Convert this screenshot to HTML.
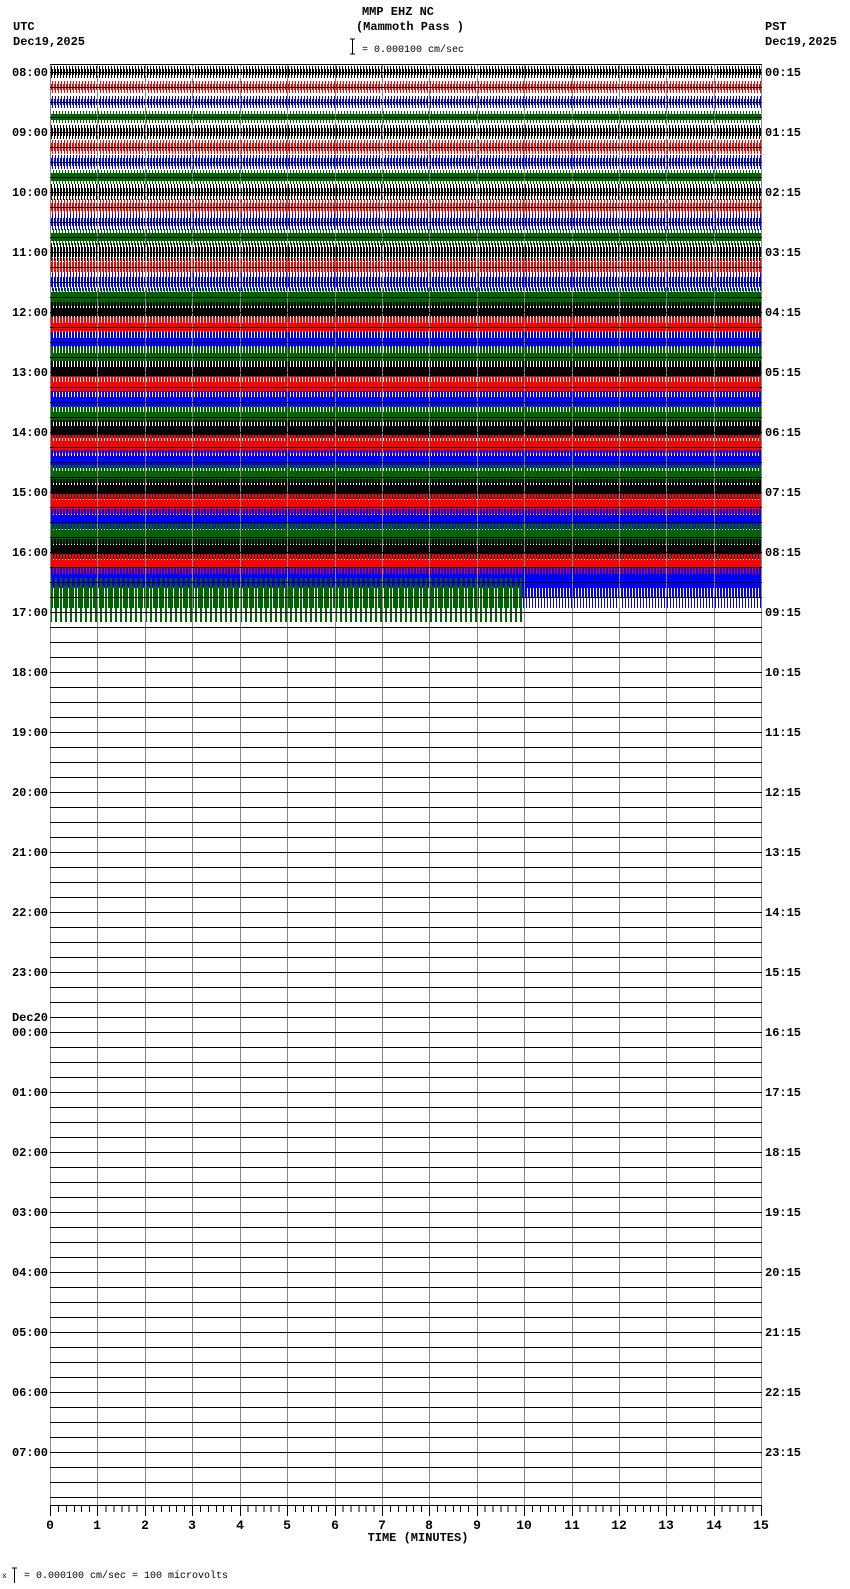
<!DOCTYPE html>
<html><head><meta charset="utf-8"><style>
html,body{margin:0;padding:0;background:#fff;}
body{width:850px;height:1584px;overflow:hidden;}
svg text{font-family:"Liberation Mono",monospace;}
</style></head><body>
<svg width="850" height="1584" viewBox="0 0 850 1584" xmlns="http://www.w3.org/2000/svg" shape-rendering="crispEdges">
<defs>
<pattern id="kS" width="3" height="4" patternUnits="userSpaceOnUse"><rect x="0" width="1" height="4" fill="#000"/></pattern>
<pattern id="kD" width="3" height="4" patternUnits="userSpaceOnUse"><rect x="0" width="2" height="4" fill="#000"/></pattern>
<pattern id="rS" width="3" height="4" patternUnits="userSpaceOnUse"><rect x="1" width="1" height="4" fill="#f00"/></pattern>
<pattern id="rD" width="3" height="4" patternUnits="userSpaceOnUse"><rect x="0" width="2" height="4" fill="#f00"/></pattern>
<pattern id="bS" width="3" height="4" patternUnits="userSpaceOnUse"><rect x="1" width="1" height="4" fill="#00f"/></pattern>
<pattern id="bD" width="3" height="4" patternUnits="userSpaceOnUse"><rect x="0" width="2" height="4" fill="#00f"/></pattern>
<pattern id="gS" width="3" height="4" patternUnits="userSpaceOnUse"><rect x="2" width="1" height="4" fill="#006400"/></pattern>
<pattern id="gD" width="3" height="4" patternUnits="userSpaceOnUse"><rect x="0" width="2" height="4" fill="#006400"/></pattern>
<pattern id="gX" width="5" height="4" patternUnits="userSpaceOnUse"><rect x="0" width="2" height="4" fill="#006400"/></pattern>
</defs>

<!-- header -->
<text x="398" y="15" font-size="12" text-anchor="middle" font-weight="bold">MMP EHZ NC</text>
<text x="410" y="30" font-size="12" text-anchor="middle" font-weight="bold">(Mammoth Pass )</text>
<text x="13" y="30" font-size="12" font-weight="bold">UTC</text>
<text x="13" y="45" font-size="12" font-weight="bold">Dec19,2025</text>
<text x="765" y="30" font-size="12" font-weight="bold">PST</text>
<text x="765" y="45" font-size="12" font-weight="bold">Dec19,2025</text>
<path d="M352.5 39v15M350 39h5M350 54h5" stroke="#000" fill="none"/>
<text x="362" y="52" font-size="10">= 0.000100 cm/sec</text>

<!-- traces -->
<g id="traces">
<rect x="50" y="66" width="711" height="12" fill="url(#kS)"/><rect x="50" y="69" width="711" height="6" fill="url(#kD)"/>
<rect x="50" y="81" width="711" height="12" fill="url(#rS)"/><rect x="50" y="84" width="711" height="6" fill="url(#rD)"/>
<rect x="50" y="96" width="711" height="12" fill="url(#bS)"/><rect x="50" y="99" width="711" height="6" fill="url(#bD)"/>
<rect x="50" y="111" width="711" height="12" fill="url(#gS)"/><rect x="50" y="114" width="711" height="6" fill="url(#gD)"/>
<rect x="50" y="125" width="711" height="14" fill="url(#kS)"/><rect x="50" y="128" width="711" height="8" fill="url(#kD)"/>
<rect x="50" y="140" width="711" height="14" fill="url(#rS)"/><rect x="50" y="143" width="711" height="8" fill="url(#rD)"/>
<rect x="50" y="155" width="711" height="14" fill="url(#bS)"/><rect x="50" y="158" width="711" height="8" fill="url(#bD)"/>
<rect x="50" y="170" width="711" height="14" fill="url(#gS)"/><rect x="50" y="173" width="711" height="8" fill="url(#gD)"/>
<rect x="50" y="184" width="711" height="16" fill="url(#kS)"/><rect x="50" y="188" width="711" height="8" fill="url(#kD)"/>
<rect x="50" y="199" width="711" height="16" fill="url(#rS)"/><rect x="50" y="203" width="711" height="8" fill="url(#rD)"/>
<rect x="50" y="214" width="711" height="16" fill="url(#bS)"/><rect x="50" y="218" width="711" height="8" fill="url(#bD)"/>
<rect x="50" y="229" width="711" height="16" fill="url(#gS)"/><rect x="50" y="233" width="711" height="8" fill="url(#gD)"/>
<rect x="50" y="243" width="711" height="18" fill="url(#kS)"/><rect x="50" y="247" width="711" height="10" fill="url(#kD)"/>
<rect x="50" y="258" width="711" height="18" fill="url(#rS)"/><rect x="50" y="262" width="711" height="10" fill="url(#rD)"/>
<rect x="50" y="273" width="711" height="18" fill="url(#bS)"/><rect x="50" y="277" width="711" height="10" fill="url(#bD)"/>
<rect x="50" y="288" width="711" height="18" fill="url(#gS)"/><rect x="50" y="292" width="711" height="10" fill="url(#gD)"/>
<rect x="50" y="302" width="711" height="20" fill="url(#kD)"/><rect x="50" y="308" width="711" height="8" fill="#000"/>
<rect x="50" y="317" width="711" height="20" fill="url(#rD)"/><rect x="50" y="323" width="711" height="8" fill="#f00"/>
<rect x="50" y="332" width="711" height="20" fill="url(#bD)"/><rect x="50" y="338" width="711" height="8" fill="#00f"/>
<rect x="50" y="347" width="711" height="20" fill="url(#gD)"/><rect x="50" y="353" width="711" height="8" fill="#006400"/>
<rect x="50" y="361" width="711" height="22" fill="url(#kD)"/><rect x="50" y="367" width="711" height="10" fill="#000"/>
<rect x="50" y="376" width="711" height="22" fill="url(#rD)"/><rect x="50" y="382" width="711" height="10" fill="#f00"/>
<rect x="50" y="391" width="711" height="22" fill="url(#bD)"/><rect x="50" y="397" width="711" height="10" fill="#00f"/>
<rect x="50" y="406" width="711" height="22" fill="url(#gD)"/><rect x="50" y="412" width="711" height="10" fill="#006400"/>
<rect x="50" y="420" width="711" height="24" fill="url(#kD)"/><rect x="50" y="426" width="711" height="12" fill="#000"/>
<rect x="50" y="435" width="711" height="24" fill="url(#rD)"/><rect x="50" y="441" width="711" height="12" fill="#f00"/>
<rect x="50" y="450" width="711" height="24" fill="url(#bD)"/><rect x="50" y="456" width="711" height="12" fill="#00f"/>
<rect x="50" y="465" width="711" height="24" fill="url(#gD)"/><rect x="50" y="471" width="711" height="12" fill="#006400"/>
<rect x="50" y="479" width="711" height="26" fill="url(#kD)"/><rect x="50" y="485" width="711" height="14" fill="#000"/>
<rect x="50" y="494" width="711" height="26" fill="url(#rD)"/><rect x="50" y="500" width="711" height="14" fill="#f00"/>
<rect x="50" y="509" width="711" height="26" fill="url(#bD)"/><rect x="50" y="515" width="711" height="14" fill="#00f"/>
<rect x="50" y="524" width="711" height="26" fill="url(#gD)"/><rect x="50" y="530" width="711" height="14" fill="#006400"/>
<rect x="50" y="539" width="711" height="26" fill="url(#kD)"/><rect x="50" y="545" width="711" height="14" fill="#000"/>
<rect x="50" y="554" width="711" height="26" fill="url(#rD)"/><rect x="50" y="560" width="711" height="14" fill="#f00"/>
<rect x="50" y="568" width="711" height="30" fill="url(#bD)"/><rect x="50" y="574" width="711" height="14" fill="#00f"/>
<rect x="522" y="590" width="239" height="18" fill="url(#bS)"/>
<rect x="50" y="578" width="472" height="44" fill="url(#gX)"/><rect x="50" y="586" width="472" height="22" fill="url(#gD)"/>
</g>

<!-- grid -->
<g stroke="#888" stroke-width="1">
<path d="M50.5 64V1505M97.5 64V1505M145.5 64V1505M192.5 64V1505M240.5 64V1505M287.5 64V1505M335.5 64V1505M382.5 64V1505M429.5 64V1505M477.5 64V1505M524.5 64V1505M572.5 64V1505M619.5 64V1505M666.5 64V1505M714.5 64V1505M761.5 64V1505"/>
</g>
<path stroke="#000" d="M50 64.5H762"/>
<g stroke="#000" stroke-width="1">
<path d="M50 72.5H762M50 87.5H762M50 102.5H762M50 117.5H762M50 132.5H762M50 147.5H762M50 162.5H762M50 177.5H762M50 192.5H762M50 207.5H762M50 222.5H762M50 237.5H762M50 252.5H762M50 267.5H762M50 282.5H762M50 297.5H762M50 312.5H762M50 327.5H762M50 342.5H762M50 357.5H762M50 372.5H762M50 387.5H762M50 402.5H762M50 417.5H762M50 432.5H762M50 447.5H762M50 462.5H762M50 477.5H762M50 492.5H762M50 507.5H762M50 522.5H762M50 537.5H762M50 552.5H762M50 567.5H762M50 582.5H762M50 597.5H762M50 612.5H762M50 627.5H762M50 642.5H762M50 657.5H762M50 672.5H762M50 687.5H762M50 702.5H762M50 717.5H762M50 732.5H762M50 747.5H762M50 762.5H762M50 777.5H762M50 792.5H762M50 807.5H762M50 822.5H762M50 837.5H762M50 852.5H762M50 867.5H762M50 882.5H762M50 897.5H762M50 912.5H762M50 927.5H762M50 942.5H762M50 957.5H762M50 972.5H762M50 987.5H762M50 1002.5H762M50 1017.5H762M50 1032.5H762M50 1047.5H762M50 1062.5H762M50 1077.5H762M50 1092.5H762M50 1107.5H762M50 1122.5H762M50 1137.5H762M50 1152.5H762M50 1167.5H762M50 1182.5H762M50 1197.5H762M50 1212.5H762M50 1227.5H762M50 1242.5H762M50 1257.5H762M50 1272.5H762M50 1287.5H762M50 1302.5H762M50 1317.5H762M50 1332.5H762M50 1347.5H762M50 1362.5H762M50 1377.5H762M50 1392.5H762M50 1407.5H762M50 1422.5H762M50 1437.5H762M50 1452.5H762M50 1467.5H762M50 1482.5H762M50 1497.5H762"/>
<path d="M50 1505.5H762"/>
</g>

<!-- bottom ticks -->
<g stroke="#000">
<path d="M50.5 1505V1516M97.5 1505V1516M145.5 1505V1516M192.5 1505V1516M240.5 1505V1516M287.5 1505V1516M335.5 1505V1516M382.5 1505V1516M429.5 1505V1516M477.5 1505V1516M524.5 1505V1516M572.5 1505V1516M619.5 1505V1516M666.5 1505V1516M714.5 1505V1516M761.5 1505V1516"/>
</g>
<g id="minor" stroke="#000">
<path d="M58.5 1505v7M66.5 1505v7M74.5 1505v7M81.5 1505v7M89.5 1505v7"/>
</g>
<use href="#minor" x="47.4"/><use href="#minor" x="94.8"/><use href="#minor" x="142.2"/><use href="#minor" x="189.6"/><use href="#minor" x="237"/><use href="#minor" x="284.4"/><use href="#minor" x="331.8"/><use href="#minor" x="379.2"/><use href="#minor" x="426.6"/><use href="#minor" x="474"/><use href="#minor" x="521.4"/><use href="#minor" x="568.8"/><use href="#minor" x="616.2"/><use href="#minor" x="663.6"/>

<g font-size="13" font-weight="bold" text-anchor="middle">
<text x="50" y="1529">0</text><text x="97" y="1529">1</text><text x="145" y="1529">2</text><text x="192" y="1529">3</text><text x="240" y="1529">4</text><text x="287" y="1529">5</text><text x="335" y="1529">6</text><text x="382" y="1529">7</text><text x="429" y="1529">8</text><text x="477" y="1529">9</text><text x="524" y="1529">10</text><text x="572" y="1529">11</text><text x="619" y="1529">12</text><text x="666" y="1529">13</text><text x="714" y="1529">14</text><text x="761" y="1529">15</text>
</g>
<text x="418" y="1541" font-size="12" font-weight="bold" text-anchor="middle">TIME (MINUTES)</text>

<text x="2" y="1578" font-size="8">x</text>
<path d="M14.5 1568v15M12 1568h5" stroke="#000" fill="none"/>
<text x="24" y="1578" font-size="10">= 0.000100 cm/sec =     100 microvolts</text>

<!-- left labels -->
<g font-size="12" font-weight="bold" text-anchor="end">
<text x="48" y="76">08:00</text><text x="48" y="136">09:00</text><text x="48" y="196">10:00</text><text x="48" y="256">11:00</text><text x="48" y="316">12:00</text><text x="48" y="376">13:00</text><text x="48" y="436">14:00</text><text x="48" y="496">15:00</text><text x="48" y="556">16:00</text><text x="48" y="616">17:00</text><text x="48" y="676">18:00</text><text x="48" y="736">19:00</text><text x="48" y="796">20:00</text><text x="48" y="856">21:00</text><text x="48" y="916">22:00</text><text x="48" y="976">23:00</text><text x="48" y="1021">Dec20</text><text x="48" y="1036">00:00</text><text x="48" y="1096">01:00</text><text x="48" y="1156">02:00</text><text x="48" y="1216">03:00</text><text x="48" y="1276">04:00</text><text x="48" y="1336">05:00</text><text x="48" y="1396">06:00</text><text x="48" y="1456">07:00</text>
</g>
<g font-size="12" font-weight="bold">
<text x="765" y="76">00:15</text><text x="765" y="136">01:15</text><text x="765" y="196">02:15</text><text x="765" y="256">03:15</text><text x="765" y="316">04:15</text><text x="765" y="376">05:15</text><text x="765" y="436">06:15</text><text x="765" y="496">07:15</text><text x="765" y="556">08:15</text><text x="765" y="616">09:15</text><text x="765" y="676">10:15</text><text x="765" y="736">11:15</text><text x="765" y="796">12:15</text><text x="765" y="856">13:15</text><text x="765" y="916">14:15</text><text x="765" y="976">15:15</text><text x="765" y="1036">16:15</text><text x="765" y="1096">17:15</text><text x="765" y="1156">18:15</text><text x="765" y="1216">19:15</text><text x="765" y="1276">20:15</text><text x="765" y="1336">21:15</text><text x="765" y="1396">22:15</text><text x="765" y="1456">23:15</text>
</g>
</svg>
</body></html>
